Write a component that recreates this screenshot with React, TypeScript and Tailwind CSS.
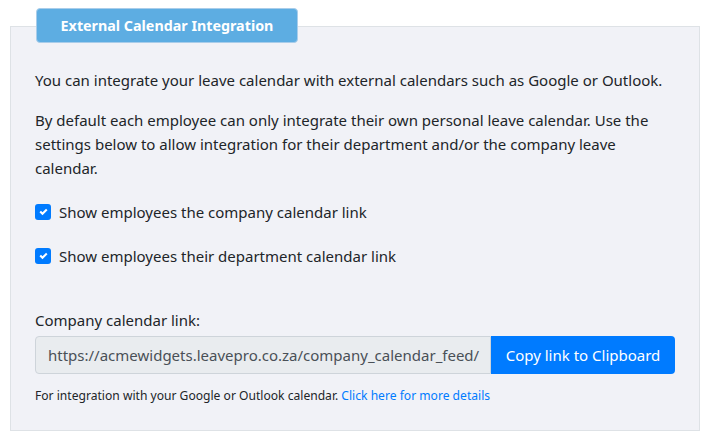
import React, { useState } from 'react';

const FONT = { fontFamily: '"Noto Sans", "Open Sans", sans-serif' };

const CheckRow: React.FC<{ label: string; checked: boolean; onToggle: () => void }> = ({ label, checked, onToggle }) => (
    <label className="flex items-center h-6 cursor-pointer" onClick={onToggle}>
        <span className={`w-4 h-4 rounded-[3px] flex items-center justify-center ${checked ? 'bg-[#007bff]' : 'bg-white border border-[#adb5bd]'}`}>
            {checked && (
                <svg width="9" height="8" viewBox="0 0 8 8">
                    <path fill="#fff" d="M6.564.75l-3.59 3.612-1.538-1.55L0 4.26l2.974 2.99L8 2.193z" />
                </svg>
            )}
        </span>
        <span className="ml-2">{label}</span>
    </label>
);

export default function App() {
    const [showCompany, setShowCompany] = useState(true);
    const [showDept, setShowDept] = useState(true);

    return (
        <div className="w-[711px] h-[443px] bg-white pt-[26px] pl-[10px] pr-[11px] text-[#212529] text-[15px] leading-6" style={FONT}>
            <div className="h-[405px] border border-[#dee2e6] bg-[#f1f2f7] px-6">
                <div className="-mt-[19px] ml-[1px] w-[262px] h-[35px] rounded-[4px] bg-[#5dade2] border border-[#a9cdea] flex items-center justify-center text-white font-bold text-[14.3px]">
                    External Calendar Integration
                </div>
                <p className="mt-[25px]">You can integrate your leave calendar with external calendars such as Google or Outlook.</p>
                <p className="mt-4">
                    By default each employee can only integrate their own personal leave calendar. Use the settings below to allow integration for their department and/or the company leave calendar.
                </p>
                <div className="mt-5 flex flex-col gap-5">
                    <CheckRow label="Show employees the company calendar link" checked={showCompany} onToggle={() => setShowCompany(!showCompany)} />
                    <CheckRow label="Show employees their department calendar link" checked={showDept} onToggle={() => setShowDept(!showDept)} />
                </div>
                <div className="mt-10">
                    <div>Company calendar link:</div>
                    <div className="mt-1 flex h-[38px]">
                        <div className="w-[456px] flex items-center px-3 bg-[#e9ecef] border border-[#ced4da] rounded-l-[4px] text-[#495057] whitespace-nowrap overflow-hidden">
                            https://acmewidgets.leavepro.co.za/company_calendar_feed/
                        </div>
                        <button className="w-[184px] bg-[#007bff] text-white rounded-r-[4px]">Copy link to Clipboard</button>
                    </div>
                    <div className="mt-[12px] text-[12.1px] leading-[19px]">
                        For integration with your Google or Outlook calendar. <a className="text-[#007bff]">Click here for more details</a>
                    </div>
                </div>
            </div>
        </div>
    );
}
